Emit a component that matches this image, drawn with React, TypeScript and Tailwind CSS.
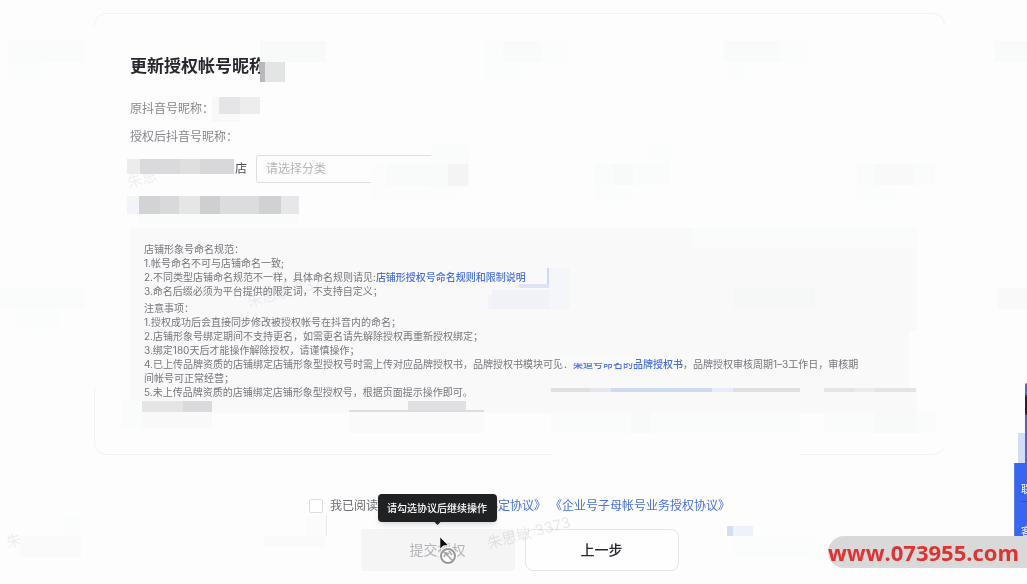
type Tile = [x: number, y: number, w: number, h: number, fill: string];

// pixelated patches laid over private parts of the page
const tiles: Tile[] = [
  // title
  [260, 41, 66, 21, "#f8f9f9"],
  [260, 62, 5, 20, "#b9b9bc"],
  [265, 62, 20, 20, "#e3e4e4"],
  // original nickname
  [212, 97, 7, 25, "#f7f8f8"],
  [219, 97, 21, 17, "#e5e5e7"],
  [240, 97, 20, 17, "#ecedec"],
  [219, 114, 21, 8, "#f8f9f9"],
  // shop name
  [127, 159, 13, 15, "#ececed"],
  [140, 159, 40, 15, "#dadadc"],
  [180, 159, 20, 15, "#dfdfe0"],
  [200, 159, 34, 15, "#d8d8da"],
  // second shop name
  [127, 196, 12, 18, "#f3f4f7"],
  [139, 196, 21, 18, "#d3d3d5"],
  [160, 196, 19, 18, "#d9d9db"],
  [179, 196, 21, 18, "#e6e6e6"],
  [200, 196, 20, 18, "#cfcfd1"],
  [220, 196, 39, 18, "#dcdcde"],
  [259, 196, 22, 18, "#d1d1d3"],
  [281, 196, 18, 18, "#e7e7ea"],
  [139, 214, 160, 11, "#fafbfb"],
  // right end of the category box
  [371, 163, 86, 38, "#fcfcfc"],
  [431, 145, 38, 42, "#fafbfb"],
  [387, 164, 61, 22, "#f9fafa"],
  [448, 164, 20, 22, "#f4f4f5"],
  // notice panel
  [692, 228, 225, 19, "#fafbfb"],
  [909, 330, 8, 58, "#fdfdfd"],
  [547, 268, 2, 20, "#cfd8f1"],
  [519, 284, 30, 4, "#dce3f5"],
  [549, 268, 21, 41, "#f5f6fa"],
  [492, 290, 57, 19, "#f0f2f8"],
  [488, 295, 4, 14, "#f2f4f9"],
  [733, 288, 82, 21, "#f6f7f7"],
  [560, 356, 76, 7, "#f9fafa"],
  [142, 401, 41, 11, "#e5e5e6"],
  [183, 401, 29, 11, "#dadadc"],
  [142, 412, 70, 16, "#f9f9f9"],
  [122, 401, 20, 26, "#fafbfb"],
  [408, 401, 58, 9, "#e0e0e2"],
  [349, 410, 135, 2, "#dddddf"],
  [349, 412, 135, 21, "#fafafa"],
  [551, 388, 39, 4, "#dfe0e0"],
  [590, 388, 21, 4, "#e4e7ee"],
  [611, 388, 101, 4, "#cfd9f2"],
  [712, 388, 21, 4, "#e8ecf8"],
  [733, 388, 67, 4, "#dfe0e0"],
  [824, 388, 31, 4, "#e4e5e5"],
  [855, 388, 20, 4, "#ebebeb"],
  [875, 388, 41, 4, "#e3e4e4"],
  [551, 412, 249, 21, "#fafbfb"],
  [824, 412, 112, 21, "#fafbfb"],
  [631, 412, 20, 21, "#f8f9f9"],
  [875, 412, 41, 21, "#f8f9f9"],
  // card border
  [93, 26, 3, 362, "#fdfdfd"],
  [943, 24, 3, 424, "#fdfdfd"],
  [551, 452, 249, 5, "#fdfdfd"],
  // page background
  [8, 41, 76, 21, "#fafbfb"],
  [8, 62, 34, 20, "#fbfcfc"],
  [484, 41, 86, 21, "#fbfcfc"],
  [503, 41, 38, 21, "#f9fafa"],
  [484, 62, 38, 20, "#fbfcfc"],
  [730, 41, 78, 21, "#fbfcfc"],
  [724, 41, 56, 21, "#f9fafa"],
  [730, 62, 15, 20, "#fbfcfc"],
  [595, 164, 75, 21, "#fafbfb"],
  [613, 164, 20, 21, "#f8f9f9"],
  [595, 185, 38, 17, "#fbfcfc"],
  [650, 144, 20, 20, "#fbfcfc"],
  [857, 164, 78, 21, "#fafbfb"],
  [875, 164, 39, 21, "#f9f9f9"],
  [857, 185, 38, 17, "#fbfcfc"],
  [995, 41, 32, 21, "#f9fafa"],
  [0, 288, 84, 21, "#fafbfb"],
  [18, 309, 42, 21, "#fbfcfc"],
  [997, 288, 30, 21, "#f9f9f9"],
  [20, 536, 61, 21, "#fafafa"],
  [62, 516, 20, 20, "#fbfcfc"],
  [264, 536, 61, 11, "#fafafa"],
  [306, 516, 20, 20, "#fbfbfb"],
  [326, 516, 1, 20, "#e9e9ec"],
  [727, 526, 6, 10, "#d4def2"],
  [733, 526, 20, 10, "#eef2f9"],
  [733, 536, 82, 21, "#fbfcfc"],
];

const watermarks = [
  { x: 489, y: 549, text: "朱思敏 3373", fill: "#ebebed" },
  { x: 249, y: 307, text: "朱思敏 3373", fill: "#f1f1f2" },
  { x: 129, y: 188, text: "朱思", fill: "#f1f1f2" },
  { x: 8, y: 548, text: "朱", fill: "#efeff0" },
];

const rules = [
  "1.帐号命名不可与店铺命名一致;",
  "2.不同类型店铺命名规范不一样，具体命名规则请见:",
  "3.命名后缀必须为平台提供的限定词，不支持自定义；",
];

function WatermarkLayer() {
  return (
    <svg
      aria-hidden="true"
      className="pointer-events-none absolute top-0 left-0 h-full w-full mix-blend-multiply"
    >
      {watermarks.map((w) => (
        <text
          key={`${w.x}-${w.y}`}
          x={w.x}
          y={w.y}
          fill={w.fill}
          fontSize="15"
          transform={`rotate(-15 ${w.x} ${w.y})`}
        >
          {w.text}
        </text>
      ))}
    </svg>
  );
}

function MosaicLayer() {
  return (
    <svg
      aria-hidden="true"
      shapeRendering="crispEdges"
      className="pointer-events-none absolute top-0 left-0 h-full w-full"
    >
      {tiles.map(([x, y, w, h, fill], i) => (
        <rect key={i} x={x} y={y} width={w} height={h} fill={fill} />
      ))}
    </svg>
  );
}

function Notice() {
  return (
    <section className="mt-[45px] flex flex-col gap-[3px] rounded bg-[#f9f9fa] p-[14px] text-[10px] leading-[14px] text-[#75777b]">
      <div>
        <p>店铺形象号命名规范：</p>
        {rules.map((rule, i) => (
          <p key={rule}>
            {rule}
            {i === 1 && (
              <a href="#naming" className="font-medium text-[#4870e0]">
                店铺形授权号命名规则和限制说明
              </a>
            )}
          </p>
        ))}
      </div>
      <div>
        <p>注意事项：</p>
        <p>1.授权成功后会直接同步修改被授权帐号在抖音内的命名；</p>
        <p>2.店铺形象号绑定期间不支持更名，如需更名请先解除授权再重新授权绑定；</p>
        <p>3.绑定180天后才能操作解除授权，请谨慎操作；</p>
        <p>
          4.已上传品牌资质的店铺绑定店铺形象型授权号时需上传对应品牌授权书，品牌授权书模块可见：
          <a href="#brand" className="font-medium text-[#4870e0]">
            渠道号命名的品牌授权书
          </a>
          ，品牌授权审核周期1–3工作日，审核期
          <br />
          间帐号可正常经营；
        </p>
        <p>5.未上传品牌资质的店铺绑定店铺形象型授权号，根据页面提示操作即可。</p>
      </div>
    </section>
  );
}

function BlockedCursor() {
  return (
    <svg
      aria-hidden="true"
      viewBox="0 0 20 30"
      className="pointer-events-none absolute top-[7px] left-[77px] h-[30px] w-5"
    >
      <circle cx="10" cy="20" r="7" fill="#fff" fillOpacity="0.7" stroke="#fff" strokeWidth="4" />
      <circle cx="10" cy="20" r="7" fill="none" stroke="#98989b" strokeWidth="2" />
      <path d="M5 15l10 10M6 21l2-4 3 1M11 15l3 4" fill="none" stroke="#a3a3a6" strokeWidth="1.5" />
      <path d="M2 1v12l3-3 5-1z" fill="#0b0b0c" stroke="#fff" strokeWidth="0.6" />
    </svg>
  );
}

function SideDock() {
  return (
    <aside className="absolute top-[383px] right-0 flex flex-col items-end text-[10px] text-white">
      <div className="relative h-20 w-0.5 rounded-tl bg-[#3b68f0]">
        <span className="absolute top-3 right-0 h-5 w-0.5 rounded-l-full bg-[#17234f]" />
        <span className="absolute top-[50px] right-0 h-[30px] w-[9px] border-r-2 border-[#3b68f0] bg-[#d5dcf6]" />
      </div>
      <div className="h-[82px] w-[13px] overflow-hidden border-l border-[#5d7fe6] bg-[#3666f2] pl-[6px]">
        <p className="mt-[19px] w-5 border-b border-[#2850cf] pb-[5px] leading-[14px]">联</p>
        <p className="mt-[22px] w-5 leading-[14px]">客</p>
      </div>
    </aside>
  );
}

export default function App() {
  return (
    <div className="relative min-h-screen overflow-hidden bg-[#fdfdfd] pt-[13px] pr-[82px] pb-[13px] pl-[94px] font-['Inter','Noto_Sans_CJK_SC',sans-serif]">
      <main>
        <div className="rounded-xl border border-[#f1f2f2] pt-[40px] pr-[27px] pb-[41px] pl-[35px]">
          <h1 className="text-[17px] leading-6 font-bold text-[#26282d]">更新授权帐号昵称</h1>
          <p className="mt-[21px] text-xs leading-5 text-[#85878b]">原抖音号昵称：</p>
          <p className="mt-2 text-xs leading-5 text-[#85878b]">授权后抖音号昵称：</p>
          <div className="mt-2 flex items-center gap-[9px] pl-[105px] text-xs">
            <label htmlFor="category" className="text-[#4b4d52]">
              店
            </label>
            <select
              id="category"
              defaultValue=""
              className="h-7 w-[180px] appearance-none rounded-[3px] border border-[#dedfe1] bg-transparent px-[9px] text-[#b6b7ba]"
            >
              <option value="">请选择分类</option>
            </select>
          </div>
          <Notice />
        </div>

        <div className="mt-[41px] flex items-center justify-center gap-[7px] text-xs leading-5 text-[#6b6d71]">
          <input
            id="agree"
            type="checkbox"
            className="h-[14px] w-[14px] appearance-none rounded-[2px] border border-[#dcdde0] bg-white"
          />
          <div className="flex whitespace-nowrap">
            <label htmlFor="agree">我已阅读并同意</label>
            <a href="#bind" className="mr-1 text-[#4870e0]">
              《店铺授权号绑定协议》
            </a>
            <a href="#business" className="text-[#4870e0]">
              《企业号子母帐号业务授权协议》
            </a>
          </div>
        </div>

        <div className="mt-[13px] flex justify-center gap-[10px] text-sm">
          <div className="relative">
            <button
              type="button"
              aria-disabled="true"
              className="h-[42px] w-[154px] cursor-not-allowed rounded bg-[#f5f5f6] text-[#b4b5b8]"
            >
              提交授权
            </button>
            <div
              role="tooltip"
              className="absolute bottom-[49px] left-[17px] z-10 h-7 w-[119px] rounded bg-[#202123] text-center text-[10px] leading-7 font-medium text-white shadow-md"
            >
              请勾选协议后继续操作
              <span className="absolute -bottom-[2px] left-[57px] h-[5px] w-[5px] rotate-45 bg-[#202123]" />
            </div>
            <BlockedCursor />
          </div>
          <button
            type="button"
            className="h-[42px] w-[154px] rounded-lg border border-[#e5e6e8] bg-[#fefefe] font-medium text-[#26282d]"
          >
            上一步
          </button>
        </div>
      </main>

      <WatermarkLayer />
      <MosaicLayer />
      <SideDock />

      <a
        href="#site"
        className="absolute right-0 bottom-4 h-8 w-[199px] rounded-l-full bg-[#d9d9d9] font-['Open_Sans',sans-serif] text-[22px] leading-8 font-bold whitespace-nowrap text-[#df3232]"
      >
        www.073955.com
      </a>
    </div>
  );
}
